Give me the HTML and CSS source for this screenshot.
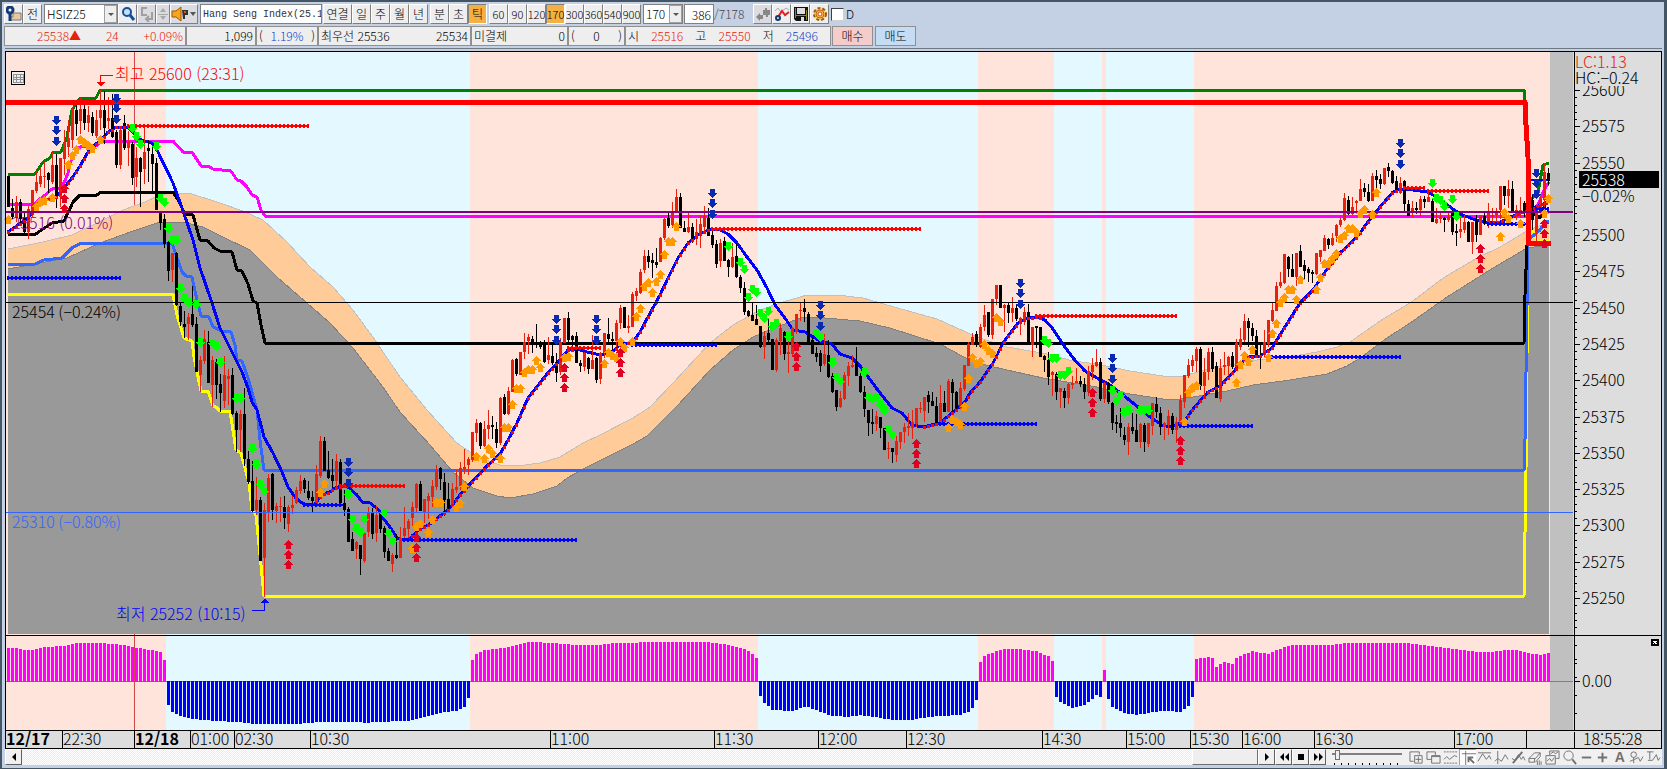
FILE: index.html
```html
<!DOCTYPE html>
<html lang="ko">
<head>
    <meta charset="utf-8">
    <title>HSIZ25 Chart</title>
    <link rel="stylesheet" href="styles.css">
</head>
<body>
    <header class="toolbar">
        <button class="btn" aria-label="Pin"><svg width="16" height="16"><path d="M1 2h8v6h4v5H5V8H1z" fill="#f4e4c8"/><path d="M7 7h8v7H4v-3h3z" fill="#e8c8a0" stroke="#777"/><circle cx="4" cy="4" r="3" fill="#fff" stroke="#123a78" stroke-width="3"/><path d="M4 7v8" stroke="#123a78" stroke-width="3"/></svg></button>
        <button class="btn gap-r">전</button>
        <div class="combo symbol">
            <input type="text" value="HSIZ25" aria-label="Symbol">
            <button class="drop" aria-label="Open symbol list"></button>
        </div>
        <button class="btn" aria-label="Search"><svg width="16" height="16"><circle cx="7" cy="6" r="4" fill="#bfe4fa" stroke="#1a4c9c" stroke-width="2"/><path d="M10 9l4 5" stroke="#1a4c9c" stroke-width="3"/></svg></button>
        <button class="btn flat" aria-label="Continue"><svg width="16" height="16" fill="none" stroke="#a0a0a0" stroke-width="2"><path d="M8 2H3v7h5M13 6v7H8M10 10l-3 3 3 3"/></svg></button>
        <button class="btn flat spin" aria-label="Step"><svg width="12" height="16" fill="#a8a8a8"><path d="M6 2l3 4H3zM6 14l3-4H3zM1 8h10v1H1z"/></svg></button>
        <button class="btn flat sound" aria-label="Sound"><svg width="26" height="16"><path d="M1 5h4l5-4v14l-5-4H1z" fill="#f7a51c" stroke="#a05a00"/><path d="M11 4h6v5h-3v4h-2z" fill="#333"/><path d="M13 5h2v2h-2z" fill="#e85020"/><path d="M19 6h6l-3 4z" fill="#555"/></svg></button>
        <input class="name" type="text" value="Hang Seng Index(25.12)" aria-label="Name">
        <button class="btn wide">연결</button>
        <button class="btn">일</button>
        <button class="btn">주</button>
        <button class="btn">월</button>
        <button class="btn gap-r">년</button>
        <button class="btn">분</button>
        <button class="btn">초</button>
        <button class="btn on gap-r">틱</button>
        <button class="btn num">60</button>
        <button class="btn num">90</button>
        <button class="btn num">120</button>
        <button class="btn num on">170</button>
        <button class="btn num">300</button>
        <button class="btn num">360</button>
        <button class="btn num">540</button>
        <button class="btn num gap-r">900</button>
        <div class="combo ticks">
            <input type="text" value="170" aria-label="Ticks">
            <button class="drop" aria-label="Open tick list"></button>
        </div>
        <input class="count" type="text" value="386" aria-label="Bars shown">
        <span class="total">/7178</span>
        <button class="btn flat" aria-label="Compare"><svg width="16" height="16"><path d="M1 11l4-4v2h3v4H5v2zM8 4h2v-2h2v2h3v5h-2v2h-2V9H8z" fill="#888"/></svg></button>
        <button class="btn" aria-label="Indicators"><svg width="16" height="16" fill="none"><path d="M1 5l3-3 3 4 5-4 3 2" stroke="#b0a8c0"/><path d="M4 11l4-6 3 4 4-3" stroke="#e02020" stroke-width="2"/><circle cx="4" cy="12" r="2" stroke="#123a68" stroke-width="2"/></svg></button>
        <button class="btn" aria-label="Save"><svg width="16" height="16"><path d="M1 1h14v14H3l-2-2z" fill="#111"/><path d="M4 2h8v6H4z" fill="#ddd"/><path d="M2 2h1v10h-1zM13 4h1v10h-1zM3 9h10v1H3z" fill="#8c8a10"/><path d="M8 11h3v4H8z" fill="#ddd"/></svg></button>
        <button class="btn" aria-label="Settings"><svg width="16" height="16"><circle cx="8" cy="8" r="6" fill="#ffd070" stroke="#9a5a10" stroke-width="2" stroke-dasharray="3 2"/><circle cx="8" cy="8" r="4" fill="#ffc040" stroke="#b06a10"/><circle cx="8" cy="8" r="2" fill="#fff" stroke="#e04010"/></svg></button>
        <label class="check"><input type="checkbox">D</label>
    </header>

    <section class="quote">
        <div class="cell price up"><span>25538▲</span><span>24</span><span>+0.09%</span></div>
        <div class="cell volume">1,099</div>
        <div class="cell ratio"><span>(</span><span class="down">1.19%</span><span>)</span></div>
        <div class="cell best"><span>최우선 25536</span><span>25534</span></div>
        <div class="cell open"><span>미결제</span><span>0</span></div>
        <div class="cell open-diff"><span>(</span><span>0</span><span>)</span></div>
        <div class="cell ohl"><span>시</span><span class="up">25516</span><span>고</span><span class="up">25550</span><span>저</span><span class="down">25496</span></div>
        <button class="order buy">매수</button>
        <button class="order sell">매도</button>
    </section>

    <main class="chart">
        <svg id="price" viewBox="5 51 1657 584"></svg>
        <svg id="osc" viewBox="5 635 1657 95"></svg>
        <svg id="time" viewBox="5 730 1657 19"></svg>
    </main>

    <footer class="bottom">
        <button class="nav" aria-label="Scroll left"><svg width="12" height="12"><path d="M8 2v8L4 6z"/></svg></button>
        <div class="track"><div class="thumb"></div></div>
        <button class="nav" aria-label="Play"><svg width="12" height="12"><path d="M4 2v8l4-4z"/></svg></button>
        <button class="nav" aria-label="Rewind"><svg width="12" height="12"><path d="M6 2v8L2 6zM11 2v8L7 6z"/></svg></button>
        <button class="nav" aria-label="Stop"><svg width="12" height="12"><path d="M3 3h6v6H3z"/></svg></button>
        <button class="nav" aria-label="Forward"><svg width="12" height="12"><path d="M2 2v8l4-4zM7 2v8l4-4z"/></svg></button>
        <input class="speed" type="range" min="0" max="20" value="1" aria-label="Speed">
        <div class="tools">
            <button aria-label="Add pane"><svg viewBox="0 0 16 16"><path d="M1 2h10v3M1 2v10h4M6 6h8v8H6zM10 7v6M7 10h6"/></svg></button>
            <button aria-label="Cascade"><svg viewBox="0 0 16 16"><path d="M6 10H1V2h9v4M6 6h9v8H6zM6 7h9"/></svg></button>
            <button aria-label="Fit"><svg viewBox="0 0 16 16"><path d="M1 2h14M1 14h14" stroke-dasharray="2 1"/><path d="M1 10l3-3 3 3 5-4 3 1"/></svg></button>
            <button class="on" aria-label="Cursor"><svg viewBox="0 0 16 16"><path d="M1 4h15M5 1v15"/><path d="M14 14L8 8M8 13V8h5" stroke-width="2"/></svg></button>
            <button aria-label="Horizontal line"><svg viewBox="0 0 16 16"><path d="M1 3h14M1 12l5-8 4 6 3-4 2 4"/></svg></button>
            <button aria-label="Vertical line"><svg viewBox="0 0 16 16"><path d="M4 1v14M1 12l3-3 4 3 4-7 3 5"/></svg></button>
            <button aria-label="Trend line"><svg viewBox="0 0 16 16"><path d="M2 14L12 2" stroke-width="2"/><path d="M1 9l3 2 4-6 3 5 2-3 2 4"/></svg></button>
            <button aria-label="Eraser"><svg viewBox="0 0 16 16"><path d="M1 9l6-6h6L8 9zM1 9v4h6V9M8 13l5-6V3M10 12v4M12 11v5M14 12v4"/></svg></button>
            <button aria-label="Picture"><svg viewBox="0 0 16 16"><path d="M5 6V1h10v8h-3M1 6h10v9H1zM2 12l3-3 2 3 3-4M6 4l3-2 2 2 3-2"/></svg></button>
            <button aria-label="Zoom"><svg viewBox="0 0 16 16"><circle cx="7" cy="6" r="5"/><path d="M11 10l4 5" stroke-width="2"/></svg></button>
            <button aria-label="Zoom out"><svg viewBox="0 0 16 16"><path d="M3 8h10" stroke-width="2"/></svg></button>
            <button aria-label="Zoom in"><svg viewBox="0 0 16 16"><path d="M3 8h10M8 3v10" stroke-width="2"/></svg></button>
            <button class="letter">A</button>
            <button aria-label="Inspect"><svg viewBox="0 0 16 16"><circle cx="5" cy="5" r="3"/><path d="M5 8v6M1 12l5-2 4-2 2 4 3-5"/></svg></button>
            <button aria-label="Text on line"><svg viewBox="0 0 16 16"><path d="M1 2h7M4 2v8M2 11h5l4-6 2 6 2-3"/></svg></button>
        </div>
    </footer>
    <script src="chart.js"></script>
</body>
</html>
```
FILE: styles.css
```css
* {
    box-sizing: border-box;
}

body {
    margin: 0;
    min-height: 100vh;
    border: solid #445566;
    border-width: 2px 3px 1px 2px;
    background: #c4d0e4;
    color: #000;
    font-family: "Noto Sans CJK KR", sans-serif;
    font-weight: 300;
    font-size: 12px;
    line-height: 16px;
}

button,
input {
    font: inherit;
    color: inherit;
    margin: 0;
    padding: 0;
    border-radius: 0;
}

svg {
    display: block;
}

/* top toolbar */
.toolbar {
    display: flex;
    align-items: center;
    height: 24px;
    padding: 2px;
}

.btn {
    flex: none;
    width: 19px;
    height: 20px;
    display: flex;
    align-items: center;
    justify-content: center;
    background: #eeeeee;
    border: 1px solid;
    border-color: #ffffff #808080 #808080 #ffffff;
    white-space: nowrap;
}

.btn.num {
    font-size: 11px;
}

.btn.wide {
    width: 29px;
}

.btn.on {
    background: #f5b041;
    border-color: #808080 #ffffff #ffffff #808080;
}

.btn.flat {
    background: #dcdce0;
}

.btn.spin {
    width: 14px;
}

.btn.sound {
    width: 28px;
    margin-right: 2px;
}

.gap-r,
.btn.gap-r {
    margin-right: 2px;
}

.combo {
    display: flex;
    flex: none;
    height: 20px;
    background: #fff;
    border: 1px solid #808080;
}

.combo input {
    flex: 1;
    min-width: 0;
    border: 0;
    background: none;
    padding-left: 2px;
}

.symbol {
    width: 74px;
}

.ticks {
    width: 40px;
}

.drop {
    width: 13px;
    border: 1px solid #a0a0a0;
    background: #eeeeee;
    display: flex;
    align-items: center;
    justify-content: center;
}

.drop::after {
    content: "";
    border: 3px solid transparent;
    border-top-color: #555;
    border-bottom: 0;
}

.name {
    flex: none;
    width: 122px;
    height: 20px;
    border: 1px solid #808080;
    background: #fff;
    padding-left: 2px;
    color: #333;
    font-family: "Liberation Mono", monospace;
    font-size: 10px;
    margin-right: 1px;
}

.count {
    width: 30px;
    height: 20px;
    margin-left: 1px;
    border: 1px solid #808080;
    background: #fff;
    text-align: right;
    padding-right: 2px;
}

.total {
    width: 39px;
    color: #444;
}

.check {
    display: flex;
    align-items: center;
    gap: 2px;
    margin-left: 2px;
}

.check input {
    appearance: none;
    width: 13px;
    height: 13px;
    background: #fff;
    border: 1px solid;
    border-color: #404040 #d0d0d0 #d0d0d0 #404040;
}

/* quote line */
.quote {
    display: flex;
    height: 20px;
    padding-left: 2px;
}

.cell {
    flex: none;
    display: flex;
    justify-content: space-between;
    align-items: center;
    padding: 0 2px;
    background: #eeeeee;
    border: 1px solid #909090;
    white-space: pre;
}

.price {
    width: 182px;
    padding-left: 32px;
}

.volume {
    width: 70px;
    justify-content: flex-end;
}

.ratio {
    width: 62px;
}

.best {
    width: 153px;
}

.open {
    width: 97px;
}

.open-diff {
    width: 57px;
}

.ohl {
    width: 206px;
    padding-right: 12px;
}

.up {
    color: #e8200c;
}

.down {
    color: #1040c8;
}

.order {
    flex: none;
    width: 41px;
    margin-left: 1px;
    border: 1px solid #909090;
}

.buy {
    background: #f5cccc;
}

.sell {
    background: #c4dcf4;
    margin-left: 2px;
}

/* chart panes */
.chart {
    margin: 2px 2px 0 3px;
    padding-top: 2px;
    border-top: 1px solid #707880;
}

.chart svg {
    width: 100%;
    height: auto;
    overflow: visible;
    font-size: 16px;
    shape-rendering: crispEdges;
}

.chart .line {
    fill: none;
    stroke-width: 3;
    stroke-linejoin: round;
}

.chart .day {
    font-weight: 700;
}

/* scroll bar and drawing tools */
.bottom {
    display: flex;
    height: 16px;
    margin: 0 2px 0 3px;
    background: #f0f0f0;
}

.nav {
    flex: none;
    width: 17px;
    display: flex;
    align-items: center;
    justify-content: center;
    background: #f0f0f0;
    border: 1px solid;
    border-color: #ffffff #606060 #606060 #ffffff;
}

.track {
    flex: 1;
    display: flex;
    justify-content: flex-end;
    background: repeating-conic-gradient(#ffffff 0 25%, #ececec 0 50%) 0 0 / 2px 2px;
}

.thumb {
    width: 66px;
    background: #eeeeee;
    border: 1px solid;
    border-color: #ffffff #707070 #707070 #ffffff;
}

.speed {
    appearance: none;
    flex: none;
    width: 70px;
    height: 16px;
    margin: 0 6px;
    background:
        linear-gradient(#808080, #808080) 0 4px / 100% 2px no-repeat,
        repeating-linear-gradient(90deg, #000 0 1px, transparent 1px 7px) 2px 14px / 100% 2px no-repeat;
}

.speed::-webkit-slider-thumb {
    appearance: none;
    width: 5px;
    height: 10px;
    margin-bottom: 4px;
    background: #eee;
    border: 1px solid #707070;
}

.tools {
    display: flex;
    flex: none;
    width: 254px;
}

.tools button {
    flex: 1;
    display: flex;
    align-items: center;
    justify-content: center;
    border: 0;
    background: none;
    color: #707070;
}

.tools .on {
    background: #fff;
    border: solid #a0a0a0;
    border-width: 1px 0 0 1px;
}

.tools svg {
    flex: none;
    width: 15px;
    height: 15px;
    fill: none;
    stroke: #707070;
}

.tools .letter {
    font-family: "Liberation Sans", sans-serif;
    font-weight: bold;
    font-size: 14px;
}
```
FILE: chart.js
```js
// u = up bar, d = down bar, then high, body top, body bottom, low (chart rows)
const bars = `
d176,176,207,207 d199,208,217,220 u196,202,218,222 d199,202,219,225 d213,218,232,233 u206,209,232,239 u190,190,215,217 u172,182,191,193 u167,176,184,187 u162,176,177,188
d172,173,180,193 u152,165,182,184 d154,165,197,208 u158,158,197,207 u130,142,159,175 u120,138,147,157 u107,109,140,148 d104,110,124,136 u98,109,121,134 d104,109,123,130
u106,115,123,132 d112,117,133,136 u110,120,136,138 u90,110,118,130 d91,110,128,144 u97,118,121,129 d94,118,137,138 d130,132,165,168 u128,130,165,169 d115,123,148,150
u131,142,148,166 d142,144,178,185 u147,158,177,187 d157,158,172,207 u128,152,169,184 d140,148,151,182 d147,154,164,191 d158,163,210,210 d212,213,223,230 d214,219,244,248
d240,242,271,281 u253,253,270,282 d252,253,305,306 d302,306,322,326 d311,324,327,338 u313,317,324,340 d286,314,325,327 d317,324,372,372 u356,360,375,392 u330,339,361,364
d331,342,383,383 u356,360,385,407 d359,362,385,399 d374,384,393,412 u356,375,401,408 u369,376,379,405 d368,375,414,415 d411,413,430,452 u410,414,430,452 d388,414,459,466
d451,459,482,484 d461,481,511,512 u477,500,510,515 d497,500,561,561 u503,510,558,597 u474,478,512,522 d473,474,510,520 u503,506,511,523 u497,506,507,522 d496,507,518,529
u505,507,524,532 u496,505,508,514 u487,490,503,504 u475,481,491,494 d478,480,489,493 d481,491,498,500 d491,497,501,513 u465,474,503,506 u436,441,476,478 d437,441,471,471
d451,470,478,479 d459,475,481,488 u454,461,481,490 d459,462,503,503 d490,503,510,516 d507,509,542,542 d532,539,551,551 u541,542,549,559 d545,545,559,575 u532,533,561,563
u507,512,532,537 d508,512,534,539 u506,515,533,542 d512,515,529,533 d526,528,552,558 d548,551,561,561 u553,555,564,572 d534,555,558,559 u527,538,558,558 u507,528,536,539
u519,521,529,541 u502,507,518,527 u483,484,508,513 d481,484,511,511 u499,499,512,523 u493,496,501,519 u480,486,497,507 u465,470,487,490 d467,468,479,490 d473,482,500,516
d483,499,508,509 u483,489,505,507 u470,487,490,493 u462,468,486,490 u449,467,469,474 u457,459,465,475 u432,432,460,462 u419,423,433,442 d422,423,446,449 u421,429,446,447
u410,425,429,439 d416,425,427,439 d422,429,443,448 u397,398,443,445 d394,397,414,415 u387,391,414,415 u359,360,392,392 d358,359,374,376 u352,352,375,375 u333,342,352,359
u334,337,341,354 d336,339,345,353 d324,342,344,348 d341,343,347,349 d340,342,362,363 u337,355,360,364 d342,356,363,365 d353,362,373,382 u338,342,372,375 u318,318,343,343
d312,318,340,342 d335,336,340,346 d332,336,363,363 d360,363,366,372 u352,353,367,371 d357,358,369,374 u335,360,369,369 d357,358,380,383 u352,353,379,384 u333,333,353,358
d318,334,339,343 d332,339,341,350 u320,323,341,347 u305,308,323,329 d307,307,328,328 u315,326,328,333 u292,294,327,327 u288,291,296,301 u269,272,293,294 u250,256,270,273
d250,256,262,268 d253,260,263,278 d248,262,265,268 u237,238,262,262 u218,219,238,240 d212,218,226,228 u202,212,225,228 u189,197,212,212 d193,197,228,228 d221,228,232,232
u213,227,232,233 d223,227,238,243 u219,232,238,245 u215,224,233,248 u206,216,227,232 d208,218,236,236 d228,235,245,248 d240,244,264,268 u239,243,261,267 d237,241,261,261
d259,260,267,277 u243,257,267,268 d243,256,277,278 d275,277,288,293 d282,288,312,315 d310,311,316,317 d303,315,321,321 d305,319,325,325 d326,326,347,348 u331,336,347,359
d318,333,340,342 d339,339,370,370 u338,340,370,372 u323,328,341,355 d331,332,354,360 u338,352,354,373 u327,328,354,356 u314,314,332,334 u302,310,311,321 d299,308,312,322
d312,314,343,345 d337,340,354,354 d347,353,357,362 d350,353,366,372 u334,354,364,366 d340,355,377,378 d373,376,392,393 d390,390,407,411 u391,398,407,408 u372,375,399,400
u362,366,376,386 u355,365,367,368 d347,362,376,376 d373,376,392,393 d386,392,409,417 d410,410,423,436 d409,422,424,434 u411,416,424,431 d417,417,428,438 d428,428,450,450
u442,448,449,459 d448,448,452,463 u436,441,455,462 u432,432,442,449 u423,427,432,443 u413,426,428,436 u410,422,428,439 u408,408,424,427 u402,408,409,413 u397,397,411,422
d391,395,402,413 d392,401,406,406 d397,406,423,424 u385,403,423,424 d391,403,412,412 u379,381,412,412 d379,382,393,411 d391,392,408,412 u382,388,407,409 u365,365,389,391
u342,344,366,366 u333,337,345,345 d331,334,344,347 u324,327,347,348 u305,315,327,331 d312,312,335,337 u299,299,335,339 u285,285,299,305 d285,285,308,308 u304,305,308,332
d303,305,313,323 u297,308,313,322 d305,308,319,321 u317,318,323,335 u307,312,319,325 d304,312,342,342 u327,327,345,357 d326,326,328,348 d327,327,357,357 d355,356,360,372
d352,360,377,385 u371,372,375,396 d372,374,392,400 u388,388,392,408 d388,391,398,408 u383,384,398,404 u376,383,385,389 u368,381,383,383 d376,381,384,387 d378,384,392,399
u366,371,392,396 u358,365,372,380 u349,362,366,367 d358,362,399,401 u382,383,399,403 d382,383,402,404 d402,403,423,430 d415,422,424,433 d408,423,428,437 d427,435,440,445
u423,427,442,455 d413,427,431,434 d414,430,442,442 u423,424,442,448 d423,425,442,452 u423,423,444,447 u403,403,426,435 d397,404,412,418 d407,413,427,435 u422,423,427,440
u410,416,425,435 d413,416,430,434 u417,422,430,443 u395,400,427,428 u375,375,402,408 u359,365,376,378 u355,360,366,372 u347,349,361,372 d347,349,386,390 u358,372,386,398
u348,352,372,380 d347,352,369,372 d362,366,398,398 u359,368,399,402 u352,365,367,375 u356,357,366,376 d352,356,367,369 u339,343,367,369 u328,339,347,350 u314,321,340,342
d318,321,328,347 d323,328,336,341 d330,336,357,358 d342,356,358,369 u330,342,355,357 u320,320,344,347 u303,310,321,322 u282,286,311,311 u272,282,286,288 u254,254,283,284
d256,257,269,277 d254,269,277,277 u253,253,277,286 d245,251,267,267 d260,265,271,279 d267,269,273,282 d270,272,274,283 u253,253,274,275 u250,250,257,262 u235,238,251,251
d238,239,245,249 u233,238,245,246 u224,225,236,242 u217,220,225,227 u193,198,220,221 d196,200,214,215 u197,207,214,215 u200,201,203,213 u179,189,201,201 d183,188,192,197
d184,192,201,202 u173,176,201,201 d170,176,180,190 d174,179,184,189 u168,168,184,185 d163,167,171,177 d170,171,183,184 d176,181,191,193 u177,183,193,194 d180,181,204,212
d200,204,216,216 u201,208,211,218 d202,208,210,214 u196,199,210,216 d196,199,202,208 u190,197,202,202 d198,201,222,222 u208,219,223,224 u212,218,219,223 d217,218,220,232
u212,217,220,222 d210,212,232,235 d224,231,233,246 u218,229,232,238 u215,222,230,233 d221,222,242,242 u222,222,242,254 d215,221,235,242 u215,215,235,235 d213,216,223,225
u203,213,224,228 u208,215,217,223 u208,213,215,222 u186,186,210,219 d186,186,196,205 u180,189,196,208 d181,189,212,213 u205,210,217,220 u197,210,213,218 d201,203,213,217
u186,200,230,230 d195,200,220,230 u205,207,232,241 u196,199,208,215 u163,172,200,208 d168,173,181,185`.trim().split(/\s+/);

const bands = [[6, 0], [166, 1], [470, 0], [758, 1], [978, 0], [1054, 1], [1102, 0], [1106, 1], [1194, 0], [1550, 2]];
const bandColors = ['#ffe4dc', '#e4f8ff', '#c0c0c0'];

const cloudTop = '8,249 43,242 72,235 103,220 123,210 145,202 160,195 173,193 192,194 217,202 243,211 263,220 287,242 310,267 333,287 353,310 375,340 400,377 427,410 457,443 477,457 500,465 517,466 540,463 560,457 583,443 600,435 633,418 650,407 673,383 710,343 733,325 760,310 783,302 807,295 837,295 863,298 887,305 937,319 977,337 1007,347 1047,354 1073,361 1097,364 1130,371 1163,376 1183,376 1213,368 1257,360 1300,355 1317,352 1337,347 1350,342 1380,321 1413,301 1443,278 1477,258 1500,247 1527,231 1549,222';
const cloudBottom = '8,269 40,263 67,258 100,243 133,231 157,223 183,222 203,227 223,237 250,250 277,277 307,303 330,323 353,348 383,387 400,412 430,445 453,472 473,488 497,496 510,498 533,494 557,486 567,478 587,467 607,457 633,444 647,436 677,406 710,370 733,350 753,337 777,327 800,318 813,317 860,321 890,328 940,344 973,362 1007,370 1043,378 1097,387 1130,394 1163,399 1180,399 1193,397 1227,391 1253,385 1290,380 1327,374 1347,366 1360,358 1387,338 1413,321 1447,297 1493,268 1527,248 1549,245';

const lines = [
    ['#ffff00', '8,294 173,294 177,315 184,338 192,341 194,357 201,391 208,391 213,406 216,407 220,411 230,411 236,450 241,453 249,483 252,510 256,515 260,555 264,596 1524,596 1526,470 1528,240 1533,231 1537,241 1549,241'],
    ['#3366ff', '8,264 35,264 44,260 62,258 73,247 82,243 172,243 176,255 182,272 186,276 192,277 197,300 201,316 209,317 213,327 222,331 231,332 235,345 237,360 242,361 248,378 257,410 260,440 264,470 1524,470 1525,440 1528,240 1540,230 1545,222 1549,221'],
    ['#000000', '8,234 36,234 40,231 52,223 64,221 73,202 80,195 97,195 101,192 173,192 178,200 185,214 193,215 200,240 208,241 214,248 220,251 232,252 237,270 242,271 248,284 253,301 257,303 261,325 265,343 1524,343 1525,295 1527,245 1530,210 1540,218 1545,205'],
    ['#ff00ff', '8,204 35,204 40,199 44,196 52,189 60,188 64,183 68,173 72,157 80,147 96,146 102,141 173,141 183,152 192,152 201,166 208,166 213,169 231,171 237,180 241,181 247,187 252,195 257,197 261,210 265,216 1527,216 1538,205 1544,190 1549,182'],
    ['#008000', '8,174 35,174 43,162 50,158 53,152 61,152 67,137 72,110 80,98 96,98 100,90 1524,90 1524,102 1530,200 1538,193 1543,165 1549,163']
];

const average = '8,232 28,218 36,207 44,200 56,197 64,188 72,178 80,166 88,152 96,144 104,137 108,132 116,127 128,127 133,132 138,138 144,141 152,143 158,152 173,183 182,208 193,240 200,268 211,300 220,328 227,342 242,372 248,388 252,402 257,410 264,437 273,453 282,472 288,487 295,497 302,503 307,505 315,504 318,500 322,494 330,492 335,488 342,486 348,487 357,495 362,502 370,503 378,509 383,518 390,527 397,538 403,540 410,539 412,536 420,529 430,524 440,516 450,508 460,495 470,484 487,466 500,454 508,440 517,423 528,398 547,374 560,360 568,350 577,349 587,352 600,355 612,352 620,345 633,342 640,332 648,317 660,295 668,278 678,258 688,243 698,235 710,229 720,230 728,234 737,243 747,257 757,270 767,288 775,305 785,318 793,330 805,332 820,341 832,344 840,354 852,358 860,366 877,389 892,408 902,413 912,425 923,427 940,423 953,412 965,402 970,393 980,382 993,363 1003,343 1018,323 1027,318 1037,317 1045,320 1053,329 1062,343 1073,358 1085,371 1097,378 1110,385 1123,395 1138,407 1150,417 1162,425 1170,427 1184,422 1193,409 1208,392 1220,386 1238,367 1247,357 1260,356 1272,348 1283,330 1300,303 1313,290 1327,269 1340,253 1357,237 1373,215 1393,192 1400,189 1413,190 1427,192 1437,197 1450,207 1460,214 1473,219 1487,223 1500,222 1513,216 1523,212 1548,202';
const rising = [[8, 126], [312, 345], [408, 572], [612, 712], [924, 1040], [1188, 1402], [1490, 1548]];

// color, row, from, to
const levels = [
    ['#ff0000', 126, 128, 308], ['#ff0000', 486, 340, 405], ['#ff0000', 229, 712, 921], ['#ff0000', 348, 568, 600],
    ['#ff0000', 316, 1036, 1177], ['#ff0000', 188, 1404, 1425], ['#ff0000', 191, 1428, 1489],
    ['#0000ff', 278, 8, 121], ['#0000ff', 505, 304, 343], ['#0000ff', 540, 404, 577], ['#0000ff', 345, 632, 717],
    ['#0000ff', 424, 940, 1037], ['#0000ff', 426, 1180, 1253], ['#0000ff', 357, 1272, 1401], ['#0000ff', 224, 1488, 1527], ['#0000ff', 209, 1536, 1549]
];

const sells = '56,120 116,98 348,462 556,319 596,319 712,193 820,305 1020,283 1112,358 1400,143 1536,173';
const buys = '64,188 288,544 416,537 564,367 620,352 796,346 916,443 1092,392 1180,440 1480,248 1544,223';
const orange = '8,219 36,206 40,201 44,200 52,197 68,164 72,155 76,149 80,139 84,142 88,145 92,148 100,139 320,492 324,483 412,548 416,526 420,523 428,532 432,519 436,502 440,502 456,507 460,503 464,486 476,456 484,458 488,448 492,453 500,458 504,427 508,427 512,404 516,388 520,388 524,372 528,369 532,369 536,360 540,367 564,357 568,356 604,363 608,352 612,355 616,357 620,341 624,347 632,341 636,316 640,308 644,286 648,282 652,292 656,281 660,274 664,254 668,241 672,241 676,226 948,427 952,419 956,421 960,424 964,406 968,378 972,357 976,363 980,361 984,344 988,350 992,353 996,317 1000,321 1184,421 1188,392 1192,387 1196,385 1236,382 1240,364 1244,355 1248,361 1252,349 1268,357 1272,333 1276,323 1280,302 1284,297 1288,289 1292,289 1296,299 1300,279 1316,289 1320,277 1324,263 1328,263 1332,258 1336,253 1340,238 1344,235 1348,228 1352,228 1356,232 1360,213 1364,209 1372,214 1376,192 1500,236 1504,212 1508,218 1520,223 1544,213 1548,198';
const green = '132,128 136,136 140,144 156,146 160,198 164,202 168,228 172,240 176,240 180,288 184,298 188,302 196,304 200,342 212,343 216,346 220,362 236,398 240,398 252,448 256,464 260,484 264,491 348,494 352,519 356,528 360,532 364,519 384,513 388,533 392,541 728,246 740,262 744,269 748,297 752,289 756,292 760,313 764,318 768,311 772,326 776,323 788,336 816,333 820,337 832,362 836,377 840,381 864,372 868,397 872,399 876,397 880,404 884,410 888,429 892,435 1044,340 1048,343 1052,358 1056,358 1060,375 1064,375 1068,371 1112,390 1116,401 1120,395 1124,412 1128,410 1140,410 1144,410 1148,410 1432,183 1436,198 1440,200 1444,206 1452,199 1456,216';

// bar index, height
const osc = '0,34 2,34 4,32 6,32 9,35 14,36 16,38 18,39 23,39 25,38 29,37 31,35 34,33 37,31 38,30 39,22 40,-24 41,-31 43,-35 46,-38 52,-40 57,-41 62,-43 72,-43 78,-41 87,-41 89,-42 92,-41 100,-40 104,-36 108,-32 112,-30 114,-26 115,-17 116,22 117,28 119,32 124,34 130,40 136,39 142,37 148,37 152,39 164,40 175,40 180,37 184,33 186,28 187,24 188,-15 189,-22 191,-29 196,-30 199,-26 200,-26 203,-31 206,-35 210,-36 213,-34 218,-37 221,-39 226,-39 230,-36 234,-35 238,-34 240,-31 241,-27 242,-19 243,20 244,26 247,31 249,33 252,33 257,31 259,27 260,26 261,21 262,-16 263,-21 266,-27 269,-24 271,-18 272,-14 273,-16 274,12 275,-18 276,-26 279,-32 282,-34 285,-32 289,-30 293,-31 295,-25 296,-16 297,23 300,25 301,24 302,15 304,20 306,18 307,24 311,31 313,29 315,28 317,32 320,36 322,37 330,37 335,39 349,39 355,36 360,34 363,32 367,30 371,30 374,32 377,32 380,29 383,27 385,29';

const times = [[5, '12/17', 1], [62, '22:30'], [134, '12/18', 1], [190, '01:00'], [234, '02:30'], [310, '10:30'], [550, '11:00'], [714, '11:30'], [818, '12:00'], [906, '12:30'], [1042, '14:30'], [1126, '15:00'], [1190, '15:30'], [1242, '16:00'], [1314, '16:30'], [1454, '17:00'], [1526, '']];

function points(list) {
    return list.split(' ').map(p => p.split(',').map(Number));
}

function valueAt(list, x) {
    for (let i = 1; i < list.length; i++) {
        if (x <= list[i][0]) {
            const [x0, y0] = list[i - 1], [x1, y1] = list[i];
            return Math.round(y0 + (y1 - y0) * (x - x0) / (x1 - x0));
        }
    }
    return list[list.length - 1][1];
}

function rect(x, y, w, h, fill) {
    return `<rect x="${x}" y="${y}" width="${w}" height="${h}" fill="${fill}"/>`;
}

function text(x, y, label, fill, cls) {
    return `<text x="${x}" y="${y}" fill="${fill || '#000'}" class="${cls || ''}">${label}</text>`;
}

function arrow(x, y, up, fill) {
    const d = up ? 'M0-4L5 1H3V5H-2V1H-4z' : 'M-2-4H3V0H5L1 5H0L-4 0H-2z';
    return `<path transform="translate(${x} ${y})" d="${d}" fill="${fill}"/>`;
}

function drawBands(top, height) {
    return bands.map(([x, c], i) => {
        const end = i + 1 < bands.length ? bands[i + 1][0] : 1573;
        return rect(x, top, end - x, height, bandColors[c]);
    }).join('');
}

function priceRow(p) {
    return Math.round(90 + (25600 - p) * 1.4514);
}

function drawPrice() {
    let s = drawBands(51, 584);
    s += rect(134, 52, 1, 583, '#d04848');
    s += `<polygon points="${cloudTop} 1549,634 8,634" fill="#ffcc99"/><polyline points="${cloudTop}" fill="none" stroke="#c0c0c0"/>`;
    s += `<polygon points="${cloudBottom} 1549,634 8,634" fill="#999999"/><polyline points="${cloudBottom}" fill="none" stroke="#808080"/>`;
    lines.forEach(([c, p]) => s += `<polyline class="line" points="${p}" stroke="${c}"/>`);
    s += `<polyline class="line" points="${average}" stroke="#0000ff"/>`;
    s += '<polyline points="1528,235 1528,180 1549,180" fill="none" stroke="#0000ff" stroke-width="2"/>';
    bars.forEach((b, i) => {
        const [hi, top, bot, lo] = b.slice(1).split(',').map(Number);
        const c = b[0] === 'u' ? '#e8200c' : '#000000', x = 8 + 4 * i;
        s += rect(x, hi, 1, lo - hi, c) + rect(x - 1, top, 3, Math.max(bot - top, 1), c);
    });
    const ma = points(average);
    rising.forEach(([a, b]) => {
        for (let x = a; x <= b; x += 4) {
            s += rect(x - 1, valueAt(ma, x) - 1, 3, 3, '#ff0000');
        }
    });
    levels.forEach(([c, y, a, b]) => {
        s += rect(a, y - 1, b - a, 2, c);
        for (let x = a; x <= b; x += 4) s += rect(x - 1, y - 2, 2, 4, c);
    });
    s += '<polyline points="6,102 1525,102 1526,125 1528,157 1529,243 1551,243" fill="none" stroke="#ff0000" stroke-width="5"/>';
    s += rect(6, 211, 1567, 2, '#800080') + rect(6, 302, 1567, 1, '#000000') + rect(6, 512, 1567, 1, '#3366ff');
    points(orange).forEach(([x, y]) => s += arrow(x, y, true, '#ff9900'));
    points(green).forEach(([x, y]) => s += arrow(x, y, false, '#00ff00'));
    points(sells).forEach(([x, y]) => [0, 10, 21].forEach(d => s += arrow(x, y + d, false, '#0a28b0')));
    points(buys).forEach(([x, y]) => [0, 10, 20].forEach(d => s += arrow(x, y + d, true, '#e00020')));

    s += '<path d="M113 75H100V82" fill="none" stroke="#ff0000"/><path d="M96 82h9l-4 5z" fill="#ff0000"/>' + text(115, 80, '최고 25600 (23:31)', '#ff0000');
    s += '<path d="M252 610H264V602" fill="none" stroke="#0000ff"/><path d="M260 603h9l-4-5z" fill="#0000ff"/>' + text(116, 620, '최저 25252 (10:15)', '#0000ff');
    s += text(12, 229, '25516 (0.01%)', '#800080') + text(12, 318, '25454 (−0.24%)') + text(12, 528, '25310 (−0.80%)', '#3366ff');
    s += rect(11, 71, 14, 14, '#000') + rect(12, 72, 12, 12, '#f0f0f0') + '<path d="M13 74h10v8H13zM13 77h10M13 79h10M16 74v8M20 74v8" fill="none" stroke="#909090"/>';

    // price scale
    s += rect(1573, 51, 89, 584, '#dddddd') + rect(1574, 51, 1, 584, '#000');
    for (let p = 25600; p >= 25230; p -= 5) {
        s += rect(1575, priceRow(p), p % 25 ? 2 : 5, 1, '#000');
        if (p % 25 === 0 && p !== 25525 && p >= 25250) s += text(1582, priceRow(p) + 6, p);
    }
    s += rect(1575, 54, 84, 32, '#dddddd') + text(1575, 68, 'LC:1.13', '#e8200c') + text(1575, 84, 'HC:−0.24');
    s += rect(1579, 171, 80, 17, '#000') + text(1582, 186, '25538', '#fff') + text(1582, 202, '−0.02%');
    s += frame(51, 635);
    document.getElementById('price').innerHTML = s;
}

function frame(top, bottom) {
    return rect(5, top, 1657, 1, '#000') + rect(5, top, 1, bottom - top, '#000') + rect(1661, top, 1, bottom - top, '#000');
}

function drawOsc() {
    let s = drawBands(635, 95) + rect(6, 681, 1567, 1, '#808080');
    const values = points(osc);
    bars.forEach((b, i) => {
        const h = valueAt(values, i);
        s += h > 0 ? rect(7 + 4 * i, 682 - h, 3, h, '#ff00ff') : rect(7 + 4 * i, 681, 3, -h, '#0000ff');
    });
    s += rect(134, 635, 1, 95, '#d04848');
    s += rect(1573, 635, 89, 95, '#dddddd') + rect(1574, 635, 1, 95, '#000') + rect(1575, 681, 5, 1, '#000') + text(1582, 687, '0.00');
    [645, 659, 663, 677, 695, 713].forEach(y => s += rect(1575, y, 2, 1, '#000'));
    s += rect(1651, 639, 8, 7, '#000') + '<path d="M1653 641l4 3M1657 641l-4 3" stroke="#fff"/>';
    document.getElementById('osc').innerHTML = s + frame(635, 730);
}

function drawTime() {
    let s = rect(5, 730, 1657, 19, '#dddddd');
    times.forEach(([x, label, day]) => s += rect(x, 730, 1, 18, '#000') + text(x + 1, 745, label, '#000', day ? 'day' : ''));
    s += rect(1574, 732, 1, 16, '#000') + text(1583, 745, '18:55:28') + rect(5, 748, 1657, 1, '#000');
    document.getElementById('time').innerHTML = s + frame(730, 749);
}

drawPrice();
drawOsc();
drawTime();
```
